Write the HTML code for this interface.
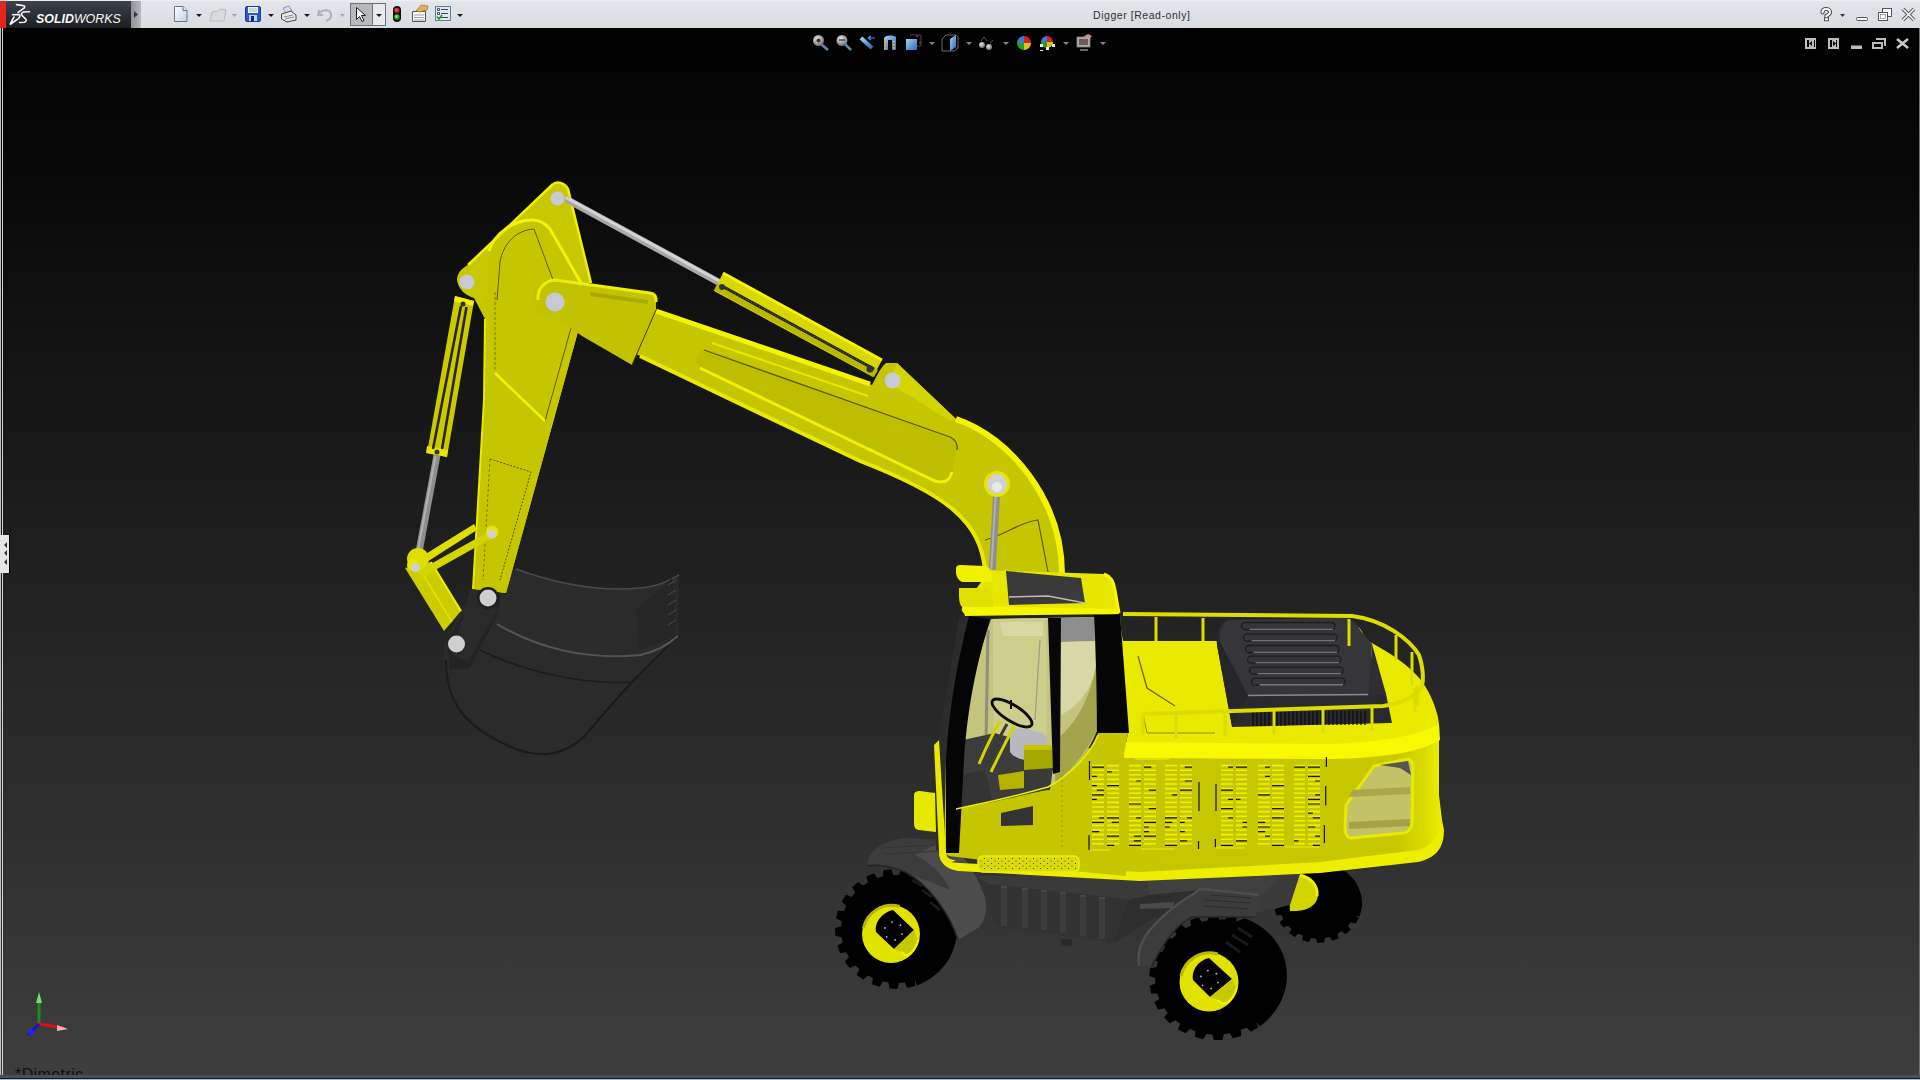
<!DOCTYPE html>
<html><head><meta charset="utf-8">
<style>
html,body{margin:0;padding:0;width:1920px;height:1080px;overflow:hidden;background:#000;font-family:"Liberation Sans",sans-serif;}
#vp{position:absolute;left:0;top:0;}
#tb{position:absolute;left:0;top:0;width:1920px;height:28px;background:linear-gradient(#f0f2f5 0,#e2e5e9 2px,#d9dde2 27px);}
#title{position:absolute;left:1093px;top:9px;font-size:10.5px;line-height:12px;color:#303030;white-space:nowrap;letter-spacing:0.55px;}
#dim{position:absolute;left:15px;top:1066px;font-size:16px;color:#0e0e0e;white-space:nowrap;letter-spacing:0.4px;}
</style></head><body>
<svg id="vp" width="1920" height="1080" viewBox="0 0 1920 1080">
<defs>
<linearGradient id="bg" x1="0" y1="28" x2="0" y2="1080" gradientUnits="userSpaceOnUse">
<stop offset="0" stop-color="#000000"/><stop offset="1" stop-color="#3e3e3e"/></linearGradient>
</defs>
<rect x="0" y="28" width="1920" height="1052" fill="url(#bg)"/>
<!-- EXCAVATOR -->
<g id="exc">
<!-- bucket -->
<g id="bucket">
<path d="M516 569 C560 585 600 592 640 588 C660 586 670 580 679 575 L678 636 C660 660 640 675 630 682 C610 705 595 725 583 737 C570 750 555 754 540 753 C520 750 480 735 452 700 C446 690 444 670 444 648 C450 625 470 595 480 585 Z" fill="#2b2b2b"/>
<path d="M446 660 C446 690 455 712 480 730 C510 750 530 755 548 754 C565 752 580 742 590 730 C605 712 620 695 632 682 L678 636" fill="none" stroke="#1a1a1a" stroke-width="2"/>
<path d="M497 624 C540 650 590 660 640 655 C655 652 668 645 678 636" fill="none" stroke="#555" stroke-width="2"/>
<path d="M516 569 C560 585 600 592 640 588 C660 586 670 580 679 575" fill="none" stroke="#4a4a4a" stroke-width="1.5"/>
<path d="M480 650 C520 670 580 685 630 682" fill="none" stroke="#1c1c1c" stroke-width="1.5"/>
<path d="M636 610 L672 578 L676 636 L640 650 Z" fill="#262626"/>
<g stroke="#4a4a4a" stroke-width="1"><line x1="668" y1="585" x2="676" y2="580"/><line x1="668" y1="595" x2="676" y2="590"/><line x1="668" y1="605" x2="676" y2="600"/><line x1="668" y1="615" x2="676" y2="610"/><line x1="668" y1="625" x2="676" y2="620"/></g>
<!-- dark link piece -->
<path d="M478 590 C482 580 496 580 500 590 L499 612 L470 668 L450 670 L447 640 Z" fill="#232323"/>
<path d="M470 590 L500 588 L496 612 L468 662 L452 655 Z" fill="#2a2a2a"/>
</g>
<!-- stick -->
<g id="stick">
<path d="M553 184 C558 181 565 183 568 189 L591 283 L581 283 L579 328 L506 593 L473 589 L484 400 L485 319 L474 298 C466 296 458 289 457 280 C457 273 462 268 468 265 Z" fill="#c8c800"/>
<path d="M489 251 C495 232 515 220 532 220 C540 220 546 224 550 229 L581 283 L579 328 L506 593 L473 589 L484 400 L485 319 Z" fill="#c6c600"/>
<path d="M489 251 C495 232 515 220 532 220 C540 220 546 224 550 229 L581 283" fill="none" stroke="#f4f400" stroke-width="3"/>
<path d="M553 184 C558 181 565 183 568 189 L591 283" fill="none" stroke="#f0f000" stroke-width="2.5"/>
<path d="M468 265 L553 184" fill="none" stroke="#f0f000" stroke-width="2.5"/>
<path d="M485 319 L484 400 L473 589" fill="none" stroke="#e8e800" stroke-width="2"/>
<path d="M497 300 L500 262 C503 244 516 230 534 229 L571 328 L545 421" fill="none" stroke="#5a5a00" stroke-width="1"/>
<path d="M495 292 L495 372 M490 459 L483 580" fill="none" stroke="#6a6a00" stroke-width="0.8" stroke-dasharray="3 2"/>
<path d="M490 459 L531 472 L500 580" fill="none" stroke="#4a4a00" stroke-width="0.9" stroke-dasharray="2 1.5"/>
<path d="M495 373 L545 421" stroke="#f4f400" stroke-width="2.5"/>
<circle cx="557.5" cy="198.5" r="7" fill="#c8c8d6"/>
<circle cx="467" cy="282" r="7.5" fill="#c8c8d6"/>
</g>
<!-- bucket cylinder -->
<g id="bcyl">
<line x1="437" y1="455" x2="419" y2="552" stroke="#8e8e8e" stroke-width="7"/>
<line x1="435.5" y1="456" x2="417.8" y2="551" stroke="#b0b0b0" stroke-width="2"/>
<path d="M455 296 L474 301 L447 457 L427 453 Z" fill="#caca00"/>
<path d="M455 296 L474 301 L473 306 L454 301 Z" fill="#f0f000"/>
<path d="M427 446 L448 450 L447 457 L426 453 Z" fill="#e6e600"/>
<line x1="461" y1="306" x2="433" y2="449" stroke="#2a2600" stroke-width="2.6"/>
<line x1="466.5" y1="307" x2="442" y2="449" stroke="#2a2600" stroke-width="2.6"/>
<circle cx="463" cy="304" r="2.5" fill="#333"/>
<circle cx="437" cy="452" r="2.5" fill="#333"/>
</g>
<!-- linkage -->
<g id="link">
<path d="M405 568 L431 562 L461 611 L444 631 Z" fill="#cccc00"/>
<path d="M431 562 L461 611" stroke="#f0f000" stroke-width="2"/>
<path d="M418 566 L452 622" stroke="#e4e400" stroke-width="1.5"/>
<path d="M416 560 L474 524 L477 530 L419 567 Z" fill="#dede00"/>
<path d="M418 571 L490 531 L494 537 L421 578 Z" fill="#d4d400"/>
<circle cx="418" cy="559" r="11" fill="#dede00"/>
<circle cx="413" cy="565" r="6" fill="#e8e800"/>
<circle cx="415.5" cy="567.5" r="4.5" fill="#cfcfd8"/>
<circle cx="492" cy="532" r="6.5" fill="#e6e600"/>
<circle cx="492" cy="534" r="4.5" fill="#cfcfd8"/>
<circle cx="488" cy="598" r="11" fill="#1e1e1e"/>
<circle cx="488" cy="598" r="8.5" fill="#cfcfcf"/>
<circle cx="456.5" cy="644" r="8.5" fill="#cfcfcf"/>
</g>
<!-- boom cylinder rod -->
<line x1="566" y1="199" x2="722" y2="284" stroke="#a8a8a8" stroke-width="7"/>
<line x1="566" y1="197.5" x2="722" y2="282.5" stroke="#d4d4d4" stroke-width="3"/>
<!-- boom -->
<g id="boom">
<path d="M652 309 L872 385 C876 378 880 368 886 363 L897 363 L956 419 C1010 437 1062 500 1062 574 L985 570 C980 522 950 496 860 461 L636 354 Z" fill="#c6c600"/>
<path d="M656 311 L870 384" fill="none" stroke="#f4f400" stroke-width="5"/>
<path d="M956 419 C1010 437 1062 500 1062 574" fill="none" stroke="#f4f400" stroke-width="6"/>
<path d="M640 356 L860 461 C950 496 980 522 985 570" fill="none" stroke="#e8e800" stroke-width="4"/>
<path d="M700 352 C694 358 696 366 702 370 L935 483 C945 486 950 482 952 474 L957 446 C957 440 955 438 950 437 L712 351 C706 349 703 349 700 352 Z" fill="#bebe00"/>
<path d="M700 368 L935 481 C945 484 950 480 952 472" fill="none" stroke="#f2f200" stroke-width="3"/>
<path d="M704 350 L950 437 C956 440 958 444 957 450" fill="none" stroke="#5a5a00" stroke-width="1.3"/>
<path d="M712 343 L868 396" fill="none" stroke="#e8e800" stroke-width="2"/>
<path d="M897 363 L956 419 L950 421 L888 382 Z" fill="#d4d400"/>
<path d="M985 540 C1005 535 1020 522 1038 520 L1048 572" fill="none" stroke="#5a5a00" stroke-width="1.2"/>
<!-- end piece -->
<path d="M555 280 L650 293 Q657 294 656 302 L656 310 L632 365 L582 336 Q565 323 548 317 A18.5 18.5 0 0 1 555 280 Z" fill="#c2c200"/>
<path d="M538 300 A18 18 0 0 1 555 280 L650 293 Q657 294 656 302" fill="none" stroke="#eeee00" stroke-width="3"/>
<path d="M656 310 L632 365" stroke="#3a3a00" stroke-width="1"/>
<path d="M590 292 L648 300 L648 304 L590 296 Z" fill="#a8a800"/>
<circle cx="555" cy="302" r="9.5" fill="#c8c8d4"/>
<circle cx="892.5" cy="380.5" r="8" fill="#c8c8d6"/>
</g>
<!-- boom cylinder -->
<g id="bcyl2">
<path d="M723 273 L882 360 L873 377 L714 291 Z" fill="#d8d800"/>
<path d="M723 273 L882 360" stroke="#f4f400" stroke-width="3"/>
<path d="M718 283 L878 370 L874 377 L714 290 Z" fill="#b8b800"/>
<line x1="722" y1="286" x2="874" y2="369" stroke="#222" stroke-width="3"/>
<line x1="722" y1="286" x2="874" y2="369" stroke="#888" stroke-width="0.8" stroke-dasharray="1 2"/>
<circle cx="722" cy="287" r="3" fill="#333"/>
<circle cx="870" cy="369" r="3.5" fill="#333"/>
</g>
<!-- lift rod -->
<line x1="997" y1="487" x2="992" y2="574" stroke="#8f8f8f" stroke-width="7"/>
<line x1="996" y1="490" x2="991" y2="574" stroke="#b0b0b0" stroke-width="2"/>
<circle cx="997" cy="484" r="13" fill="#e6e600"/>
<circle cx="997" cy="484" r="10" fill="#d0d0d8"/>
<circle cx="997" cy="487" r="5" fill="#e8e8ee"/>
<g id="rearwheel">
<path d="M1354.6 915.1 L1358.8 918.0 L1355.7 923.6 L1350.7 922.3 L1347.9 925.8 L1350.7 929.8 L1345.7 934.1 L1341.5 931.3 L1337.5 933.7 L1338.7 938.3 L1332.3 940.8 L1329.4 936.9 L1324.8 937.9 L1324.1 942.6 L1317.2 943.0 L1316.0 938.4 L1311.2 937.9 L1308.9 942.1 L1302.2 940.3 L1302.8 935.6 L1298.5 933.7 L1294.7 936.9 L1289.1 933.2 L1291.4 928.9 L1288.1 925.8 L1283.3 927.6 L1279.5 922.4 L1283.3 919.1 L1281.4 915.1 L1276.2 915.4 L1274.5 909.3 L1279.3 907.3 L1279.0 903.0 L1274.0 901.6 L1274.8 895.4 L1280.0 895.0 L1276.7 889.3 L1278.5 885.5 L1280.7 881.8 L1283.3 878.4 L1286.3 875.2 L1289.7 872.4 L1293.4 869.8 L1297.3 867.7 L1301.5 865.9 L1305.9 864.5 L1310.4 863.6 L1314.9 863.1 L1319.5 863.0 L1324.1 863.4 L1328.6 864.2 L1333.0 865.4 L1337.3 867.0 L1341.3 869.1 L1345.1 871.5 L1348.6 874.2 L1351.7 877.3 L1354.5 880.6 L1356.8 884.2 L1358.8 888.0 L1360.3 892.0 L1361.3 896.1 L1361.9 900.2 L1362.0 904.4 L1361.6 908.6 L1360.7 912.7 L1359.3 916.7 Z" fill="#000"/>
<path d="M1288 874 C1302 872 1318 880 1318 894 C1318 906 1306 912 1290 911 Z" fill="#d4d400"/>
<path d="M1300 875 C1312 878 1318 886 1317 896" fill="none" stroke="#f0f000" stroke-width="3"/>
</g>
<!-- undercarriage -->
<g id="under">
<!-- frame top -->
<path d="M977 876 L1282 873 L1300 874 L1290 905 L1252 914 L1200 905 L1150 905 L1128 900 L988 884 Z" fill="#3a3a3a"/>
<path d="M1147 877 L1282 874 L1262 896 L1200 890 L1150 895 Z" fill="#404040"/>
<path d="M1128 900 L1150 895 L1200 890 L1252 897 L1252 914 L1200 910 L1150 920 L1114 943 Z" fill="#2e2e2e"/>
<!-- tank -->
<path d="M988 884 L1128 899 L1114 943 L994 926 Z" fill="#323232"/>
<g fill="#3c3c3c">
<path d="M1001 886h6v40h-6z M1022 888h6v40h-6z M1041 890h6v40h-6z M1060 892h6v41h-6z M1080 895h6v41h-6z M1099 897h6v42h-6z"/>
</g>
<g fill="#474747">
<path d="M1001 886h6v2h-6z M1022 888h6v2h-6z M1041 890h6v2h-6z M1060 892h6v2h-6z M1080 895h6v2h-6z M1099 897h6v2h-6z"/>
</g>
<path d="M1061 939 h11 v7 h-11z" fill="#2a2a2a"/>
<path d="M1140 904 L1175 902 L1172 908 L1140 909 Z" fill="#4a4a4a"/>
</g>
<g id="wheel1">
<path d="M914.8 979.8 L915.2 986.0 L907.3 988.0 L904.6 982.4 L899.0 983.0 L897.5 989.0 L889.4 988.6 L888.4 982.6 L882.8 981.5 L879.7 986.8 L872.0 984.2 L872.9 978.1 L867.9 975.5 L863.3 979.6 L856.7 974.9 L859.4 969.3 L855.3 965.4 L849.7 968.1 L844.8 961.7 L849.0 957.1 L846.3 952.2 L840.1 953.1 L837.4 945.6 L842.7 942.4 L841.6 937.0 L835.4 936.1 L835.0 928.1 L841.1 926.6 L841.6 921.0 L836.0 918.4 L837.9 910.7 L844.1 911.0 L846.3 905.8 L841.7 901.7 L845.8 894.8 L851.7 896.9 L855.3 892.6 L852.1 887.3 L858.1 882.0 L863.1 885.6 L867.9 882.5 L866.4 876.6 L873.7 873.2 L877.4 878.1 L882.8 876.5 L883.2 870.3 L891.2 869.2 L893.3 875.0 L899.0 875.0 L901.1 869.2 L909.1 870.4 L909.4 876.5 L916.9 872.6 L921.5 874.5 L925.9 876.7 L930.1 879.3 L934.1 882.2 L937.9 885.4 L941.3 888.9 L944.5 892.6 L947.4 896.6 L949.9 900.8 L952.0 905.2 L953.8 909.8 L955.2 914.5 L956.2 919.3 L956.8 924.1 L957.0 929.0 L956.8 933.9 L956.2 938.7 L955.2 943.5 L953.8 948.2 L952.0 952.8 L949.9 957.2 L947.4 961.4 L944.5 965.4 L941.3 969.1 L937.9 972.6 L934.1 975.8 L930.1 978.7 L925.9 981.3 L921.5 983.5 L916.9 985.4 Z" fill="#000"/>
<g stroke="#1c1c1c" stroke-width="2.5"><path d="M912 880 L922 886 M922 890 L932 897 M930 902 L940 910"/></g>
<ellipse cx="891" cy="934" rx="29" ry="29" fill="#e2e200"/>
<path d="M863.5 928.2 A29 29 0 0 1 899.7 906.5" fill="none" stroke="#b8b800" stroke-width="3"/>
<path d="M893 910 L914 930 L894 949 L876 932 C874 922 883 912 893 910 Z" fill="#000"/>
<path d="M914 930 L918.0 939.8 C915.6 951.4 905.5 960.1 902 952 L894 949 Z" fill="#c8c800"/>
<path d="M918.0 939.8 C915.6 951.4 905.5 960.1 902 952" fill="none" stroke="#f4f400" stroke-width="2"/>
<circle cx="902.0" cy="934.1" r="0.9" fill="#c0c0d8"/>
<circle cx="895.1" cy="939.9" r="0.9" fill="#c0c0d8"/>
<circle cx="886.6" cy="936.8" r="0.9" fill="#c0c0d8"/>
<circle cx="885.0" cy="927.9" r="0.9" fill="#c0c0d8"/>
<circle cx="891.9" cy="922.1" r="0.9" fill="#c0c0d8"/>
<circle cx="900.4" cy="925.2" r="0.9" fill="#c0c0d8"/>
</g>
<g id="wheel2">
<path d="M1256.1 1021.9 L1258.2 1027.3 L1250.9 1031.7 L1246.5 1027.7 L1240.9 1030.1 L1241.2 1035.9 L1232.9 1038.3 L1229.9 1033.3 L1223.8 1034.2 L1222.5 1039.9 L1213.8 1040.1 L1212.4 1034.5 L1206.3 1033.9 L1203.3 1039.0 L1195.0 1037.0 L1195.4 1031.3 L1189.8 1029.1 L1185.4 1033.3 L1178.0 1029.3 L1180.1 1023.8 L1175.4 1020.3 L1169.9 1023.3 L1164.1 1017.5 L1167.7 1012.8 L1164.3 1008.2 L1158.2 1009.7 L1154.4 1002.6 L1159.2 998.9 L1157.3 993.6 L1151.1 993.5 L1149.6 985.7 L1155.3 983.4 L1155.1 977.8 L1149.2 976.1 L1150.1 968.2 L1156.3 967.3 L1157.8 961.8 L1152.6 958.7 L1155.8 951.3 L1162.0 952.1 L1165.1 947.1 L1161.1 942.8 L1166.4 936.4 L1172.1 938.7 L1176.5 934.7 L1174.0 929.5 L1181.0 924.6 L1185.7 928.3 L1191.1 925.5 L1190.3 919.9 L1198.4 917.0 L1201.8 921.7 L1207.8 920.4 L1208.8 914.7 L1217.4 913.9 L1219.2 919.4 L1225.3 919.6 L1227.9 914.3 L1236.4 915.8 L1236.5 921.5 L1244.6 918.2 L1248.9 919.9 L1253.2 921.9 L1257.2 924.2 L1261.1 926.8 L1264.7 929.5 L1268.1 932.6 L1271.3 935.8 L1274.2 939.2 L1276.9 942.9 L1279.2 946.6 L1281.3 950.6 L1283.0 954.6 L1284.4 958.8 L1285.6 963.1 L1286.3 967.4 L1286.8 971.8 L1286.9 976.2 L1286.7 980.6 L1286.1 985.0 L1285.2 989.3 L1284.0 993.6 L1282.4 997.8 L1280.6 1001.9 L1278.4 1005.9 L1276.0 1009.7 L1273.2 1013.4 L1270.2 1016.9 L1267.0 1020.2 L1263.5 1023.4 L1259.8 1026.2 Z" fill="#000"/>
<g stroke="#1a1a1a" stroke-width="3"><path d="M1232 935 L1248 945 M1238 928 L1252 937 M1226 942 L1240 952"/></g>
<ellipse cx="1209" cy="982" rx="29.5" ry="29.5" fill="#e2e200"/>
<path d="M1181.0 976.1 A29.5 29.5 0 0 1 1217.8 954.0" fill="none" stroke="#b8b800" stroke-width="3"/>
<path d="M1209 958 L1232 979 L1210 997 L1193 980 C1191 970 1199 960 1209 958 Z" fill="#000"/>
<path d="M1232 979 L1236.4 987.9 C1234.1 999.7 1223.8 1008.5 1218 1000 L1210 997 Z" fill="#c8c800"/>
<path d="M1236.4 987.9 C1234.1 999.7 1223.8 1008.5 1218 1000" fill="none" stroke="#f4f400" stroke-width="2"/>
<circle cx="1218.0" cy="982.6" r="0.9" fill="#c0c0d8"/>
<circle cx="1211.1" cy="988.4" r="0.9" fill="#c0c0d8"/>
<circle cx="1202.6" cy="985.3" r="0.9" fill="#c0c0d8"/>
<circle cx="1201.0" cy="976.4" r="0.9" fill="#c0c0d8"/>
<circle cx="1207.9" cy="970.6" r="0.9" fill="#c0c0d8"/>
<circle cx="1216.4" cy="973.7" r="0.9" fill="#c0c0d8"/>
</g><!-- left fender -->
<path d="M868 860 C872 848 885 840 905 838 L945 840 C960 850 975 870 984 895 C988 908 986 920 978 928 L958 940 C950 915 930 885 905 872 C890 866 878 864 868 866 Z" fill="#3c3c3c"/>
<path d="M905 872 C930 885 950 915 958 940 L978 928 C986 920 988 908 984 895 C975 870 960 850 945 840 L915 855 C935 865 945 878 950 890 Z" fill="#4c4c4c"/>
<path d="M868 866 C878 864 890 866 905 872 C930 885 950 915 958 940" fill="none" stroke="#222" stroke-width="1.5"/>
<path d="M880 848 L935 845 M883 854 L940 851" stroke="#333" stroke-width="1"/>
<!-- near right fender -->
<path d="M1139 966 C1137 950 1142 940 1150 930 C1165 912 1180 902 1195 893 C1198 890 1200 889 1203 889 L1259 895 C1262 896 1262 900 1260 905 L1255 917 L1192 917 C1175 925 1162 945 1151 968 Z" fill="#3c3c3c"/>
<path d="M1139 966 C1137 950 1142 940 1150 930 C1165 912 1180 902 1195 893 C1198 890 1200 889 1203 889 L1259 895" fill="none" stroke="#4e4e4e" stroke-width="2.5"/>
<path d="M1151 968 C1162 945 1175 925 1192 917 L1255 917" fill="none" stroke="#262626" stroke-width="1.5"/>
<path d="M1205 900 L1250 903 M1203 906 L1248 909 M1210 895 L1252 898" stroke="#2c2c2c" stroke-width="1.2"/>
<!-- body -->
<g id="body">
<defs>
<linearGradient id="face" x1="1120" y1="0" x2="1442" y2="0" gradientUnits="userSpaceOnUse">
<stop offset="0" stop-color="#c6c600"/><stop offset="0.86" stop-color="#c8c800"/><stop offset="0.95" stop-color="#dcdc00"/><stop offset="1" stop-color="#eeee00"/></linearGradient>
<pattern id="dots" x="0" y="0" width="7" height="5" patternUnits="userSpaceOnUse"><circle cx="1" cy="1" r="0.55" fill="#3a3a00"/><circle cx="4.5" cy="3.5" r="0.55" fill="#3a3a00"/></pattern>
<linearGradient id="win" x1="0" y1="619" x2="0" y2="800" gradientUnits="userSpaceOnUse">
<stop offset="0" stop-color="#d4d49a"/><stop offset="1" stop-color="#c0c07a"/></linearGradient>
</defs>
<!-- base: face of rear body -->
<path d="M1060 745 L1124 752 L1330 752 C1390 750 1425 740 1439 729 L1439 795 L1442 820 C1442 835 1436 848 1418 854 L1320 867 L1140 876 L1060 870 Z" fill="url(#face)"/>
<!-- deck top -->
<path d="M1118 613 L1123 641 L1218 641 L1230 620 L1350 622 C1358 624 1362 630 1366 640 C1395 655 1420 672 1430 695 C1436 708 1440 720 1439 732 C1420 745 1390 752 1330 754 L1124 754 L1128 733 Z" fill="#eaea00"/>
<path d="M1120 742 L1330 744 C1385 742 1420 735 1439 724 L1440 740 C1420 752 1385 758 1330 759 L1120 758 Z" fill="#f8f800"/>
<!-- bottom rim -->
<path d="M941 852 C943 860 950 863 960 863 L1140 872 L1320 862 L1418 850 C1432 846 1440 836 1442 820 L1444 830 C1444 848 1436 858 1418 862 L1320 873 L1140 881 L958 871 C946 869 940 862 939 855 Z" fill="#eeee00"/>
<!-- right window -->
<path d="M1346 805 L1374 766 L1408 759 C1412 760 1413 764 1413 769 L1412 823 C1412 828 1408 833 1403 833 L1351 838 C1347 838 1345 833 1345 828 Z" fill="#c2c266" stroke="#eaea00" stroke-width="3"/>
<path d="M1352 790 L1410 787 L1410 794 L1349 797 Z" fill="#a8a84a"/>
<path d="M1349 822 L1410 819 L1410 826 L1349 829 Z" fill="#a4a446"/>
<path d="M1380 765 L1408 761 L1411 775 L1400 768 Z" fill="#555"/>
<!-- deck panel lines -->
<path d="M1138 656 L1147 688 L1175 706" fill="none" stroke="#6a6a00" stroke-width="1.3"/>
<path d="M1143 714 L1147 733 L1215 733" fill="none" stroke="#8a8a00" stroke-width="1"/>
<!-- engine cover -->
<path d="M1232 727 L1217 645 C1215 630 1220 620 1230 619.5 L1342 618 C1350 618 1356 622 1360 630 L1386 694 L1392 723 Z" fill="#2a2a2e"/>
<path d="M1230 620 L1342 618 C1350 618 1356 622 1360 630 L1372 644 L1369 696 L1248 696 L1220 642 C1219 630 1223 621 1230 620 Z" fill="#35353a"/>
<path d="M1220 642 L1248 696 L1232 726 L1217 645 Z" fill="#26262a"/>
<path d="M1372 644 L1386 694 L1369 696 Z" fill="#2e2e33"/>
<path d="M1248 695.5 L1368 694.5" stroke="#8a8a8e" stroke-width="1.5"/>
<rect x="1241.5" y="622.5" width="93.5" height="7" rx="3.5" fill="none" stroke="#1c1c20" stroke-width="1.3"/>
<rect x="1243.5" y="634.1" width="93.5" height="7" rx="3.5" fill="none" stroke="#1c1c20" stroke-width="1.3"/>
<rect x="1245.5" y="645.5" width="93.5" height="7" rx="3.5" fill="none" stroke="#1c1c20" stroke-width="1.3"/>
<rect x="1247.5" y="656.1" width="93.5" height="7" rx="3.5" fill="none" stroke="#1c1c20" stroke-width="1.3"/>
<rect x="1249.5" y="667.1" width="93.5" height="7" rx="3.5" fill="none" stroke="#1c1c20" stroke-width="1.3"/>
<rect x="1251.5" y="678.2" width="93.5" height="7" rx="3.5" fill="none" stroke="#1c1c20" stroke-width="1.3"/>
<path d="M1249.5 629.2 H1333.0 M1251.5 640.8 H1335.0 M1253.5 652.2 H1337.0 M1255.5 662.8 H1339.0 M1257.5 673.8 H1341.0 M1259.5 684.9 H1343.0" stroke="#8e8e92" stroke-width="1.1"/>
<g stroke="#0a0a0a" stroke-width="1.2" fill="none">
<path d="M1253 712V726 M1257 712V726 M1261 712V726 M1265 712V726 M1269 712V726 M1273 712V726 M1277 712V726 M1281 712V726 M1285 712V726 M1289 711V725 M1293 711V725 M1297 711V725 M1301 711V725 M1305 711V725 M1309 711V725 M1313 711V725 M1317 711V725 M1321 711V725 M1325 711V725 M1329 711V725 M1333 711V725 M1337 711V725 M1341 711V725 M1345 711V725 M1349 711V725 M1353 711V725 M1357 711V725 M1361 711V725 M1365 711V725"/>
</g>
<!-- railing -->
<g fill="none" stroke="#dcdc00">
<path d="M1123 614 L1352 616 C1385 620 1410 640 1419 655 C1424 670 1424 685 1420 690 C1410 700 1395 705 1383 706 L1143 714" stroke-width="4"/>
<path d="M1156 617 V641 M1203 618 V641 M1349 619 V646 M1396 635 V660 M1412 652 V685 M1417 685 V706 M1143 714 V735 M1176 713 V738 M1225 712 V736 M1274 710 V735 M1323 709 V733 M1372 707 V731 M1415 688 V712" stroke-width="3"/>
</g>
<!-- cab -->
<path d="M960 614 L969 616 L946 760 L944 853 L936 850 L934 760 Z" fill="#2c2c2c"/>
<!-- cab body yellow under window -->
<path d="M1094 615 L1120 614 L1128 733 L1124 754 L1062 745 L1062 870 L949 856 L944 853 L946 760 L956 809 C990 800 1030 790 1048 787 C1070 775 1090 755 1098 735 Z" fill="#c6c600"/>
<path d="M1062 745 L1124 754 L1126 876 L1062 870 Z" fill="#c6c600"/>
<!-- window interior -->
<path d="M991 619 L1094 617 C1096 650 1097 700 1097 730 C1090 750 1075 770 1048 787 C1020 795 990 803 956 809 L960 760 C966 700 980 650 991 619 Z" fill="#c4c47e"/>
<path d="M993 619 L1046 618 L1047 735 C1030 740 1010 738 993 732 Z" fill="#cdcd8c"/>
<path d="M1000 622 L1003 636 L1043 636 L1043 622 Z" fill="#d8d8a4"/>
<path d="M988 630 L986 742" stroke="#8e8e7a" stroke-width="3"/>
<path d="M1040 640 L1035 720" stroke="#a0a080" stroke-width="1.2"/>
<path d="M1061 618 L1094 617 L1095 641 L1061 642 Z" fill="#8e8e8e"/>
<path d="M1061 642 L1095 641 L1096 670 C1090 690 1080 705 1061 715 Z" fill="#d8d8a6"/>
<path d="M1096 665 L1097 730 C1085 755 1070 772 1055 782 L1056 740 C1075 725 1090 700 1096 665 Z" fill="#a4a44c"/>
<path d="M963 740 L995 733 C1010 738 1030 742 1045 738 L1046 790 C1020 796 990 803 958 808 Z" fill="#3c3c3c"/>
<path d="M1010 730 C1020 727 1035 730 1046 735 L1046 758 C1030 762 1015 760 1010 752 Z" fill="#b8b8c0"/>
<path d="M960 775 L985 770 L992 800 L962 806 Z" fill="#333"/>
<path d="M1024 745 L1052 745 L1053 770 L1024 772 Z" fill="#a6a600"/>
<path d="M1024 745 L1052 745 L1052 750 L1024 750 Z" fill="#c4c400"/>
<path d="M1024 770 L1053 768 L1050 790 L1024 792 Z" fill="#3a3a3a"/>
<path d="M998 775 L1024 771 L1024 788 L1000 790 Z" fill="#b4b400"/>
<path d="M979 764 C985 750 992 735 1000 721" fill="none" stroke="#d4d400" stroke-width="3"/>
<path d="M991 772 C998 757 1006 742 1014 726" fill="none" stroke="#d4d400" stroke-width="3"/>
<path d="M985 768 C992 753 999 738 1007 724" fill="none" stroke="#3a3a3a" stroke-width="3"/>
<ellipse cx="1012" cy="713" rx="23" ry="8" transform="rotate(32 1012 713)" fill="none" stroke="#0a0a0a" stroke-width="2.8"/>
<path d="M1011 709 L1011 700" stroke="#0a0a0a" stroke-width="2"/>
<!-- black pillars -->
<path d="M969 616 L990 619 C978 660 968 700 964 760 L959 853 L946 853 L946 760 C950 700 958 660 969 616 Z" fill="#050505"/>
<path d="M1048 618 L1061 618 L1060 772 L1053 774 Z" fill="#080808"/>
<path d="M1094 615 L1120 614 L1129 733 L1097 733 C1097 700 1096 650 1094 615 Z" fill="#050505"/>
<!-- left yellow edge strip -->
<path d="M934 745 L939 740 L946 853 C947 858 950 860 956 860 L949 864 C942 862 940 858 939 852 Z" fill="#e8e800"/>
<!-- door handle -->
<path d="M1001 813 L1033 806 L1033 825 L1001 826 Z" fill="#333"/>
<path d="M1098 735 C1090 755 1070 775 1048 787 C1030 792 990 802 956 809" fill="none" stroke="#f0f000" stroke-width="1.5"/>
<path d="M1062 760 L1062 850" stroke="#9a9a00" stroke-width="1" stroke-dasharray="2 3"/>
<!-- step -->
<rect x="978" y="856" width="101" height="16" rx="5" fill="#dada10"/>
<rect x="978" y="856" width="101" height="16" rx="5" fill="none" stroke="#f0f000" stroke-width="1.5"/>
<rect x="980" y="858" width="97" height="12" rx="4" fill="url(#dots)"/>
<!-- fender tab -->
<path d="M914 795 C914 792 917 791 920 791 L935 793 L936 832 L919 830 C916 830 914 827 914 824 Z" fill="#e8e800"/>
<!-- roof -->
<path d="M962 608 L990 570 L1104 574 C1110 576 1114 582 1115 590 L1119 613 L968 615 C963 614 961 611 962 608 Z" fill="#e6e600"/>
<path d="M962 606 L1118 609 L1119 614 L965 616 Z" fill="#f6f600"/>
<path d="M1104 574 C1110 576 1114 582 1115 590 L1119 613" fill="none" stroke="#f8f800" stroke-width="3"/>
<path d="M1006 571 L1081 578 L1085 603 L1009 605 Z" fill="#3a3a3a"/>
<path d="M1009 597 L1048 596 L1085 603" fill="none" stroke="#bbb" stroke-width="1.5"/>
<path d="M956 568 C956 566 958 565 960 565 L985 566 C990 567 992 572 992 577 L992 582 L962 582 C958 580 956 576 956 572 Z" fill="#f0f000"/>
<path d="M959 588 L985 588 C990 589 993 595 993 600 L993 607 L962 607 C959 604 959 598 959 594 Z" fill="#e0e000"/>
<!-- grilles -->
<g id="grille">
<path d="M1092 765.6h12 M1092 770.2h12 M1092 774.8h12 M1092 779.4h12 M1092 784.0h12 M1092 788.6h12 M1092 793.2h12 M1092 797.8h12 M1092 802.4h12 M1092 807.0h12 M1092 811.6h12 M1092 816.2h12 M1092 820.8h12 M1092 825.4h12 M1092 830.0h12 M1092 834.6h12 M1092 839.2h12 M1092 843.8h12 M1107 765.6h12 M1107 770.2h12 M1107 774.8h12 M1107 779.4h12 M1107 784.0h12 M1107 788.6h12 M1107 793.2h12 M1107 797.8h12 M1107 802.4h12 M1107 807.0h12 M1107 811.6h12 M1107 816.2h12 M1107 820.8h12 M1107 825.4h12 M1107 830.0h12 M1107 834.6h12 M1107 839.2h12 M1107 843.8h12 M1129 765.6h12 M1129 770.2h12 M1129 774.8h12 M1129 779.4h12 M1129 784.0h12 M1129 788.6h12 M1129 793.2h12 M1129 797.8h12 M1129 802.4h12 M1129 807.0h12 M1129 811.6h12 M1129 816.2h12 M1129 820.8h12 M1129 825.4h12 M1129 830.0h12 M1129 834.6h12 M1129 839.2h12 M1129 843.8h12 M1144 765.6h12 M1144 770.2h12 M1144 774.8h12 M1144 779.4h12 M1144 784.0h12 M1144 788.6h12 M1144 793.2h12 M1144 797.8h12 M1144 802.4h12 M1144 807.0h12 M1144 811.6h12 M1144 816.2h12 M1144 820.8h12 M1144 825.4h12 M1144 830.0h12 M1144 834.6h12 M1144 839.2h12 M1144 843.8h12 M1165 765.6h12 M1165 770.2h12 M1165 774.8h12 M1165 779.4h12 M1165 784.0h12 M1165 788.6h12 M1165 793.2h12 M1165 797.8h12 M1165 802.4h12 M1165 807.0h12 M1165 811.6h12 M1165 816.2h12 M1165 820.8h12 M1165 825.4h12 M1165 830.0h12 M1165 834.6h12 M1165 839.2h12 M1165 843.8h12 M1180 765.6h12 M1180 770.2h12 M1180 774.8h12 M1180 779.4h12 M1180 784.0h12 M1180 788.6h12 M1180 793.2h12 M1180 797.8h12 M1180 802.4h12 M1180 807.0h12 M1180 811.6h12 M1180 816.2h12 M1180 820.8h12 M1180 825.4h12 M1180 830.0h12 M1180 834.6h12 M1180 839.2h12 M1180 843.8h12 M1221 765.6h12 M1221 770.2h12 M1221 774.8h12 M1221 779.4h12 M1221 784.0h12 M1221 788.6h12 M1221 793.2h12 M1221 797.8h12 M1221 802.4h12 M1221 807.0h12 M1221 811.6h12 M1221 816.2h12 M1221 820.8h12 M1221 825.4h12 M1221 830.0h12 M1221 834.6h12 M1221 839.2h12 M1221 843.8h12 M1236 765.6h11 M1236 770.2h11 M1236 774.8h11 M1236 779.4h11 M1236 784.0h11 M1236 788.6h11 M1236 793.2h11 M1236 797.8h11 M1236 802.4h11 M1236 807.0h11 M1236 811.6h11 M1236 816.2h11 M1236 820.8h11 M1236 825.4h11 M1236 830.0h11 M1236 834.6h11 M1236 839.2h11 M1236 843.8h11 M1258 765.6h12 M1258 770.2h12 M1258 774.8h12 M1258 779.4h12 M1258 784.0h12 M1258 788.6h12 M1258 793.2h12 M1258 797.8h12 M1258 802.4h12 M1258 807.0h12 M1258 811.6h12 M1258 816.2h12 M1258 820.8h12 M1258 825.4h12 M1258 830.0h12 M1258 834.6h12 M1258 839.2h12 M1258 843.8h12 M1272 765.6h12 M1272 770.2h12 M1272 774.8h12 M1272 779.4h12 M1272 784.0h12 M1272 788.6h12 M1272 793.2h12 M1272 797.8h12 M1272 802.4h12 M1272 807.0h12 M1272 811.6h12 M1272 816.2h12 M1272 820.8h12 M1272 825.4h12 M1272 830.0h12 M1272 834.6h12 M1272 839.2h12 M1272 843.8h12 M1294 765.6h11 M1294 770.2h11 M1294 774.8h11 M1294 779.4h11 M1294 784.0h11 M1294 788.6h11 M1294 793.2h11 M1294 797.8h11 M1294 802.4h11 M1294 807.0h11 M1294 811.6h11 M1294 816.2h11 M1294 820.8h11 M1294 825.4h11 M1294 830.0h11 M1294 834.6h11 M1294 839.2h11 M1294 843.8h11 M1308 765.6h12 M1308 770.2h12 M1308 774.8h12 M1308 779.4h12 M1308 784.0h12 M1308 788.6h12 M1308 793.2h12 M1308 797.8h12 M1308 802.4h12 M1308 807.0h12 M1308 811.6h12 M1308 816.2h12 M1308 820.8h12 M1308 825.4h12 M1308 830.0h12 M1308 834.6h12 M1308 839.2h12 M1308 843.8h12" stroke="#f2f200" stroke-width="1.6"/>
<path d="M1092.0 767.2h12.0 M1092.0 776.4h4.8 M1092.0 785.6h4.8 M1096.8 790.2h7.2 M1092.0 794.8h12.0 M1092.0 799.4h4.8 M1099.2 817.8h4.8 M1092.0 822.4h12.0 M1092.0 831.6h7.2 M1107.0 771.8h4.8 M1107.0 785.6h12.0 M1107.0 817.8h12.0 M1111.8 822.4h7.2 M1107.0 836.2h12.0 M1107.0 845.4h7.2 M1136.2 781.0h4.8 M1129.0 804.0h12.0 M1136.2 817.8h4.8 M1133.8 836.2h7.2 M1133.8 840.8h7.2 M1129.0 845.4h12.0 M1144.0 767.2h7.2 M1148.8 790.2h7.2 M1148.8 808.6h7.2 M1144.0 822.4h12.0 M1144.0 827.0h4.8 M1144.0 831.6h4.8 M1144.0 836.2h12.0 M1172.2 794.8h4.8 M1165.0 817.8h12.0 M1165.0 822.4h7.2 M1165.0 827.0h4.8 M1165.0 845.4h12.0 M1184.8 767.2h7.2 M1184.8 781.0h7.2 M1180.0 790.2h12.0 M1187.2 817.8h4.8 M1180.0 822.4h4.8 M1180.0 831.6h4.8 M1180.0 840.8h7.2 M1228.2 767.2h4.8 M1221.0 790.2h12.0 M1228.2 799.4h4.8 M1221.0 808.6h12.0 M1228.2 817.8h4.8 M1221.0 845.4h12.0 M1236.0 767.2h11.0 M1236.0 799.4h4.4 M1242.6 822.4h4.4 M1242.6 827.0h4.4 M1236.0 840.8h11.0 M1265.2 767.2h4.8 M1265.2 776.4h4.8 M1258.0 794.8h12.0 M1258.0 822.4h7.2 M1258.0 827.0h12.0 M1258.0 831.6h7.2 M1265.2 836.2h4.8 M1272.0 785.6h12.0 M1272.0 808.6h12.0 M1272.0 817.8h12.0 M1272.0 845.4h12.0 M1294.0 767.2h11.0 M1294.0 840.8h4.4 M1308.0 767.2h12.0 M1308.0 776.4h12.0 M1315.2 781.0h4.8 M1315.2 794.8h4.8 M1308.0 799.4h12.0 M1308.0 804.0h12.0 M1308.0 813.2h4.8 M1312.8 817.8h7.2 M1308.0 827.0h7.2 M1315.2 836.2h4.8 M1312.8 845.4h7.2" stroke="#111" stroke-width="1.2"/>
<path d="M1089.5 761V780 M1089 835V850 M1199 782V811 M1198.5 841V849 M1216 784V811 M1215.4 839V847.5 M1326.4 757V767 M1325.7 786V805.5 M1324.4 825V843" stroke="#111" stroke-width="1.2"/>
<path d="M1135 759h34 M1217 758h30 M1286 757h32 M1090 850h20 M1141 849h34 M1215 848h30 M1285 847h34" stroke="#f0f000" stroke-width="1"/>
</g>
</g>
</g>
<!-- heads-up toolbar -->
<g id="hud">
<defs>
<radialGradient id="mg" cx="0.4" cy="0.35" r="0.7"><stop offset="0" stop-color="#e8e8e8"/><stop offset="1" stop-color="#6a6a6a"/></radialGradient>
<linearGradient id="bl" x1="0" y1="0" x2="1" y2="1"><stop offset="0" stop-color="#a8d0f0"/><stop offset="1" stop-color="#2a6ac0"/></linearGradient>
</defs>
<line x1="821" y1="44" x2="828" y2="50" stroke="#5a8ab0" stroke-width="2.5"/>
<circle cx="818.5" cy="40.5" r="5.5" fill="url(#mg)"/>
<circle cx="818.5" cy="40.5" r="2" fill="#333"/>
<line x1="845" y1="44" x2="851" y2="50" stroke="#5a8ab0" stroke-width="2.5"/>
<circle cx="842" cy="40.5" r="5.5" fill="url(#mg)"/>
<path d="M839 40h6" stroke="#444" stroke-width="1.5"/>
<path d="M861 38 L872 48" stroke="url(#bl)" stroke-width="4"/>
<path d="M868 38h7 M868 38 l3-2 M868 38 l3 2" stroke="#4a90e0" stroke-width="1.2"/>
<path d="M884 50 V38 C886 35 892 35 896 37 V50 H892 V40 H888 V50 Z" fill="url(#bl)"/>
<path d="M885 39 V49 M894 41 V49" stroke="#d8b020" stroke-width="2" stroke-dasharray="2 1"/>
<rect x="906" y="39" width="11" height="11" fill="url(#bl)"/>
<path d="M910 35 H921 V46 H917" fill="none" stroke="#555" stroke-width="0.8"/>
<circle cx="917" cy="36" r="1" fill="#e02020"/><circle cx="920" cy="43" r="1" fill="#e02020"/>
<path d="M929 42 h6 l-3 3z" fill="#8a8a8a"/>
<path d="M942 39 L946 35 H956 L958 37 V48 L954 51 H942 Z" fill="none" stroke="#777" stroke-width="0.9"/>
<path d="M950 39 L956 35 V47 L950 51 Z" fill="url(#bl)"/>
<path d="M966 42 h6 l-3 3z" fill="#8a8a8a"/>
<circle cx="982" cy="45" r="3" fill="url(#mg)"/><circle cx="989" cy="47" r="3" fill="url(#mg)"/>
<path d="M981 41 L984 37 L987 41 M990 43 L993 40" fill="none" stroke="#666" stroke-width="0.8"/>
<path d="M1003 42 h6 l-3 3z" fill="#8a8a8a"/>
<path d="M1024 43 L1024 36 A7 7 0 0 0 1017 43 Z" fill="#3a7ad8"/>
<path d="M1024 43 L1024 36 A7 7 0 0 1 1031 43 Z" fill="#d82020"/>
<path d="M1024 43 L1017 43 A7 7 0 0 0 1024 50 Z" fill="#20a020"/>
<path d="M1024 43 L1031 43 A7 7 0 0 1 1024 50 Z" fill="#e0c020"/>
<path d="M1047 42 L1047 36 A6 6 0 0 0 1041 42 Z" fill="#3a7ad8"/>
<path d="M1047 42 L1047 36 A6 6 0 0 1 1053 42 Z" fill="#d82020"/>
<path d="M1047 42 L1041 42 A6 6 0 0 0 1047 48 Z" fill="#20a020"/>
<path d="M1047 42 L1053 42 A6 6 0 0 1 1047 48 Z" fill="#e0c020"/>
<path d="M1040 44h3v3h-3z M1046 47h3v3h-3z M1052 44h3v3h-3z M1040 50h3v1h-3z" fill="#eee"/>
<path d="M1063 42 h6 l-3 3z" fill="#8a8a8a"/>
<rect x="1077" y="37" width="13" height="10" fill="#aaa" stroke="#888" stroke-width="0.8"/>
<rect x="1079" y="39" width="9" height="6" fill="#6a5a5a"/>
<path d="M1083 37 L1088 34 L1092 36 L1089 39 Z" fill="#c8a050"/>
<path d="M1080 50h8" stroke="#aaa" stroke-width="1.2"/>
<path d="M1100 42 h6 l-3 3z" fill="#8a8a8a"/>
<!-- viewport window controls -->
<g fill="#bdbdbd">
<path d="M1805 38h11v11h-11z M1807 40v7h2v-7z M1812 41l-3 2.5l3 2.5z M1814 40v7h1v-7z" fill-rule="evenodd"/>
<path d="M1828 38h11v11h-11z M1830 40v7h2v-7z M1833 41l3 2.5l-3 2.5z M1836 40v7h1v-7z" fill-rule="evenodd"/>
<rect x="1851" y="45.5" width="11" height="3.5"/>
<path d="M1876 38h10v8h-2v-6h-8z"/>
<path d="M1872 42h11v7h-11z M1874 44v3h7v-3z" fill-rule="evenodd"/>
</g>
<path d="M1897 39 L1908 48 M1908 39 L1897 48" stroke="#c8c8c8" stroke-width="2.6"/>
</g>
<!-- right edge -->
<rect x="1919" y="28" width="1" height="1052" fill="#6e6e76"/>
<!-- left edge -->
<rect x="0" y="28" width="1" height="1052" fill="#bdbdbd"/>
<rect x="2" y="28" width="1" height="1052" fill="#d0d0d0"/>
<rect x="0" y="535" width="9" height="38" fill="#e6e6e6"/>
<rect x="9" y="535" width="1" height="38" fill="#000"/>
<path d="M4 545l3-3v6z M4 553l3-3v6z M4 562l3-3v6z" fill="#333"/>
<!-- bottom line -->

<!-- triad -->
<g id="triad">
<line x1="39" y1="1024" x2="39" y2="999" stroke="#1f8a1f" stroke-width="3"/>
<path d="M36 1003 L39 992 L42 1003z" fill="#7ed87e"/>
<line x1="39" y1="1024" x2="64" y2="1028" stroke="#e01010" stroke-width="3"/>
<path d="M57 1025 L68 1029 L57 1031z" fill="#ffb0b0"/>
<line x1="39" y1="1024" x2="28" y2="1035" stroke="#1010d0" stroke-width="3"/>
<circle cx="31" cy="1032" r="3" fill="#2020ff"/>
</g>
</svg>
<div id="tb">
<svg width="1920" height="28" viewBox="0 0 1920 28" style="position:absolute;left:0;top:0">
<defs>
<linearGradient id="logo" x1="0" y1="0" x2="0" y2="1"><stop offset="0" stop-color="#3d434b"/><stop offset="1" stop-color="#1b1e22"/></linearGradient>
<linearGradient id="arr" x1="0" y1="0" x2="1" y2="0"><stop offset="0" stop-color="#8e9196"/><stop offset="1" stop-color="#b5b8bc"/></linearGradient>
<linearGradient id="doc" x1="0" y1="0" x2="1" y2="1"><stop offset="0" stop-color="#ffffff"/><stop offset="1" stop-color="#b9d3ec"/></linearGradient>
<radialGradient id="rl" cx="0.4" cy="0.4" r="0.6"><stop offset="0" stop-color="#ff6060"/><stop offset="1" stop-color="#a00000"/></radialGradient>
<radialGradient id="gl" cx="0.4" cy="0.4" r="0.6"><stop offset="0" stop-color="#80ff80"/><stop offset="1" stop-color="#008000"/></radialGradient>
</defs>
<rect x="0" y="1" width="6" height="27" fill="#e3251b"/>
<rect x="6" y="1" width="125" height="27" fill="url(#logo)"/>
<rect x="131" y="1" width="10" height="27" fill="url(#arr)"/>
<path d="M134 11 L138 14.5 L134 18z" fill="#3a3a3a"/>
<!-- 3DS logo -->
<g fill="none" stroke="#f4f4f4" stroke-width="1.6" stroke-linecap="round">
<path d="M16.5 4.6 L24 5.8 C25 6.3 24.8 7.3 24 8.2 L18 12.3"/>
<path d="M12.5 14.7 L19.5 14.6 C20.5 15 20 17 18 19 L10 24.5 L14 17"/>
<path d="M29.5 11.8 L23.5 12 C21 12.6 21 14.5 23 16.5 L25.5 18.8 C27 20.5 26 22 24 22.3 L19.5 22.5"/>
</g>
<text x="36" y="22.5" font-family="Liberation Sans" font-size="12.4" font-style="italic" fill="#f8f8f8"><tspan font-weight="bold">SOLID</tspan><tspan>WORKS</tspan></text>
<!-- new doc -->
<path d="M174.5 6.5 H183 L187 10.5 V21.5 H174.5 Z" fill="url(#doc)" stroke="#6d7378" stroke-width="1"/>
<path d="M183 6.5 V10.5 H187" fill="#e6eef6" stroke="#6d7378" stroke-width="1"/>
<path d="M196 14 h6 l-3 3z" fill="#1a1a1a"/>
<!-- open (disabled) -->
<path d="M210 21 L212 12 L218 11 L220 9 L226 10 L224 21 Z" fill="#d8dadc" stroke="#b8babd" stroke-width="1"/>
<path d="M232 14 h5 l-2.5 3z" fill="#a0a0a0"/>
<!-- save -->
<rect x="245.5" y="6.5" width="15" height="15" rx="1.5" fill="#2c57d6" stroke="#1a3aa0" stroke-width="1"/>
<rect x="248" y="7" width="10" height="6" fill="#f2f2f2"/>
<path d="M249 9h8 M249 11h8" stroke="#9aa" stroke-width="0.8"/>
<rect x="249" y="15" width="8" height="6" fill="#c8d4f0"/>
<rect x="251" y="16" width="3" height="5" fill="#102a80"/>
<path d="M268 14 h6 l-3 3z" fill="#1a1a1a"/>
<!-- print -->
<path d="M283 8 L289 6 L292 11 L286 13z" fill="#cfe0f5" stroke="#7a8a9a" stroke-width="0.8"/>
<path d="M281.5 14 L291 11 L296 15 V20 L287 22 L281.5 19 Z" fill="#e8e8e8" stroke="#444" stroke-width="1"/>
<path d="M284 17 L293 15 M285 19 L294 17" stroke="#777" stroke-width="0.8"/>
<path d="M304 14 h6 l-3 3z" fill="#1a1a1a"/>
<!-- undo disabled -->
<path d="M319 10 L318 15 L323 15 M319 14 C322 9 330 9 331 14 C332 18 329 20 326 21" fill="none" stroke="#aeb0b3" stroke-width="2"/>
<path d="M340 14 h5 l-2.5 3z" fill="#a8a8a8"/>
<!-- select -->
<rect x="350.5" y="3.5" width="22" height="22" fill="#b5b9be" stroke="#6e7378" stroke-width="1"/>
<rect x="372.5" y="3.5" width="13" height="22" fill="#e8eaec" stroke="#6e7378" stroke-width="1"/>
<path d="M356.5 7.5 L356.5 19.5 L359.5 16.5 L362 21.5 L364 20.5 L361.5 15.5 L365.5 15.5 Z" fill="#fafafa" stroke="#222" stroke-width="1"/>
<path d="M376 14 h6 l-3 3z" fill="#1a1a1a"/>
<!-- traffic light -->
<rect x="393" y="6" width="8" height="16" rx="4" fill="#111"/>
<circle cx="397" cy="10.5" r="2.8" fill="url(#rl)"/>
<circle cx="397" cy="17" r="2.8" fill="url(#gl)"/>
<!-- options -->
<path d="M412.5 11.5 H425.5 V21.5 H412.5 Z" fill="#fafafa" stroke="#555" stroke-width="1"/>
<path d="M414 15h10 M414 17.5h10 M414 20h10" stroke="#888" stroke-width="0.8"/>
<path d="M416 11 L421 5 L428 6 L427 10 L420 12 Z" fill="#e0b060" stroke="#8a6020" stroke-width="0.6"/>
<!-- checklist -->
<rect x="435.5" y="6.5" width="15" height="14" fill="#dbe8f5" stroke="#6a7a88" stroke-width="1"/>
<path d="M437.5 8.5h2v2h-2z M437.5 12.5h2v2h-2z" fill="none" stroke="#333" stroke-width="0.8"/>
<path d="M441 9.5h7 M441 13.5h7 M441 17.5h7" stroke="#333" stroke-width="0.9"/>
<path d="M437 16.5 L439 19 L442 15" fill="none" stroke="#1a9a1a" stroke-width="1.6"/>
<path d="M457 14 h6 l-3 3z" fill="#1a1a1a"/>
<!-- right window controls -->
<path d="M1822.5 12.5 C1822.5 10 1824 9 1826 9 C1828.5 9 1830 10.5 1830 12.3 C1830 14 1828.2 15 1826.5 15.8 L1826.5 17" fill="none" stroke="#505050" stroke-width="4.2" stroke-linecap="round"/><path d="M1822.5 12.5 C1822.5 10 1824 9 1826 9 C1828.5 9 1830 10.5 1830 12.3 C1830 14 1828.2 15 1826.5 15.8 L1826.5 17" fill="none" stroke="#fff" stroke-width="2" stroke-linecap="round"/><rect x="1824.5" y="17.8" width="4" height="3" fill="#fff" stroke="#505050" stroke-width="1"/>
<path d="M1840 14 h5 l-2.5 3z" fill="#333"/>
<rect x="1856.5" y="17.5" width="11" height="3" rx="1" fill="#fafafa" stroke="#555" stroke-width="1"/>
<rect x="1882.5" y="8.5" width="9" height="8" fill="#fafafa" stroke="#555" stroke-width="1"/>
<rect x="1878.5" y="12.5" width="9" height="8" fill="#fafafa" stroke="#555" stroke-width="1"/>
<rect x="1880.5" y="14.5" width="5" height="4" fill="#fff" stroke="#777" stroke-width="0.6"/>
<path d="M1903 9 L1914 20 M1914 9 L1903 20" stroke="#555" stroke-width="3.6"/>
<path d="M1903 9 L1914 20 M1914 9 L1903 20" stroke="#fafafa" stroke-width="1.6"/>
</svg>
</div>
<div id="title">Digger [Read-only]</div>
<div id="dim">*Dimetric</div>
<div style="position:absolute;left:0;top:1075px;width:1920px;height:3px;background:#46505c"></div><div style="position:absolute;left:0;top:1078px;width:1920px;height:1px;background:#0c1a2a"></div><div style="position:absolute;left:0;top:1079px;width:1920px;height:1px;background:#a8b8cc"></div>
</body></html>
